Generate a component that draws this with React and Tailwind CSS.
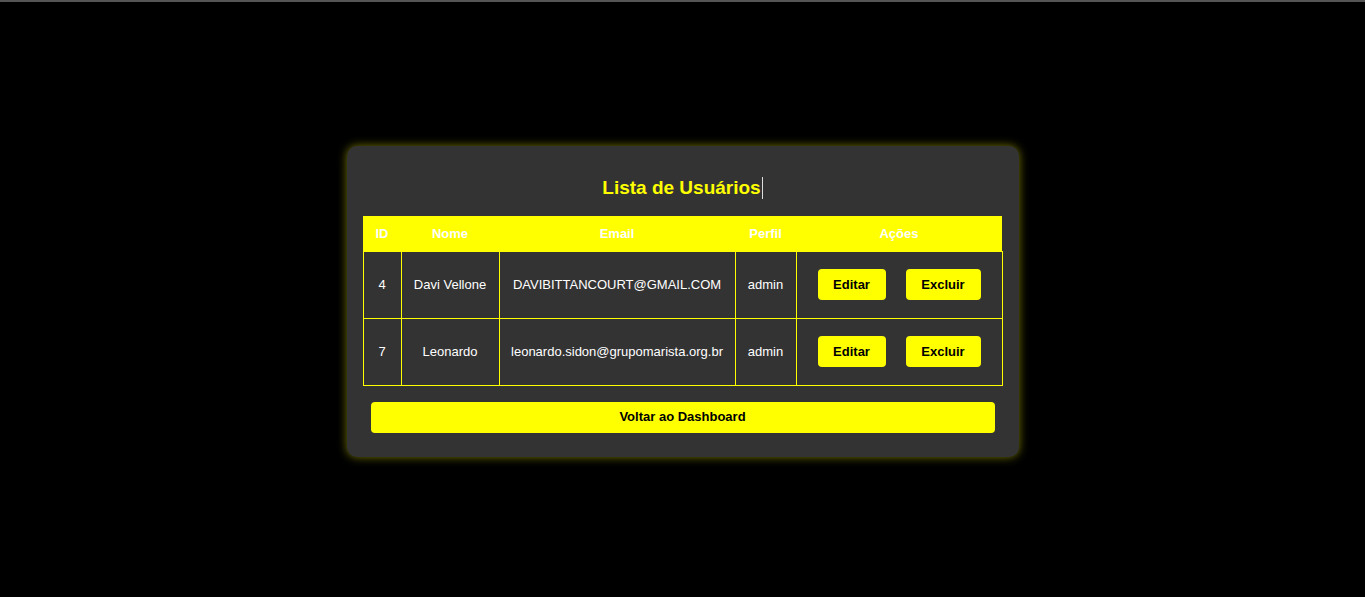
import React from 'react';

const usuarios = [
  { id: 4, nome: 'Davi Vellone', email: 'DAVIBITTANCOURT@GMAIL.COM', perfil: 'admin' },
  { id: 7, nome: 'Leonardo', email: 'leonardo.sidon@grupomarista.org.br', perfil: 'admin' },
];

const font = { fontFamily: '"Liberation Sans", Arial, sans-serif' };

export default function App() {
  return (
    <div className="min-h-[597px] bg-black" style={font}>
      <div className="h-[2px] bg-[#555]" />
      <div className="flex justify-center pt-[144px]">
        <div className="w-[672px] rounded-[10px] bg-[#333] px-4 pt-[30px] pb-6 shadow-[0_0_10px_rgba(255,255,0,0.45)]">
          <h2 className="mb-4 flex items-center justify-center text-[19px] font-bold leading-6 text-[#ffff00]">
            Lista de Usuários
            <span className="ml-[1px] inline-block h-[22px] w-px bg-[#ddd]" />
          </h2>

          <table className="w-[640px] border-collapse text-[13px] text-white">
            <thead>
              <tr className="h-[35px] bg-[#ffff00]">
                <th className="w-[38px] font-bold">ID</th>
                <th className="w-[98px] font-bold">Nome</th>
                <th className="w-[236px] font-bold">Email</th>
                <th className="w-[61px] font-bold">Perfil</th>
                <th className="font-bold">Ações</th>
              </tr>
            </thead>
            <tbody>
              {usuarios.map((u) => (
                <tr key={u.id} className="h-[67px]">
                  <td className="border border-[#ffff00] text-center">{u.id}</td>
                  <td className="border border-[#ffff00] text-center">{u.nome}</td>
                  <td className="border border-[#ffff00] text-center">{u.email}</td>
                  <td className="border border-[#ffff00] text-center">{u.perfil}</td>
                  <td className="border border-[#ffff00] text-center">
                    <div className="flex justify-center gap-5">
                      <button className="h-[31px] w-[68px] rounded bg-[#ffff00] text-[13px] font-bold text-black">
                        Editar
                      </button>
                      <button className="h-[31px] w-[75px] rounded bg-[#ffff00] text-[13px] font-bold text-black">
                        Excluir
                      </button>
                    </div>
                  </td>
                </tr>
              ))}
            </tbody>
          </table>

          <div className="mt-4 px-2">
            <button className="h-[31px] w-full rounded bg-[#ffff00] text-[13px] font-bold text-black">
              Voltar ao Dashboard
            </button>
          </div>
        </div>
      </div>
    </div>
  );
}
